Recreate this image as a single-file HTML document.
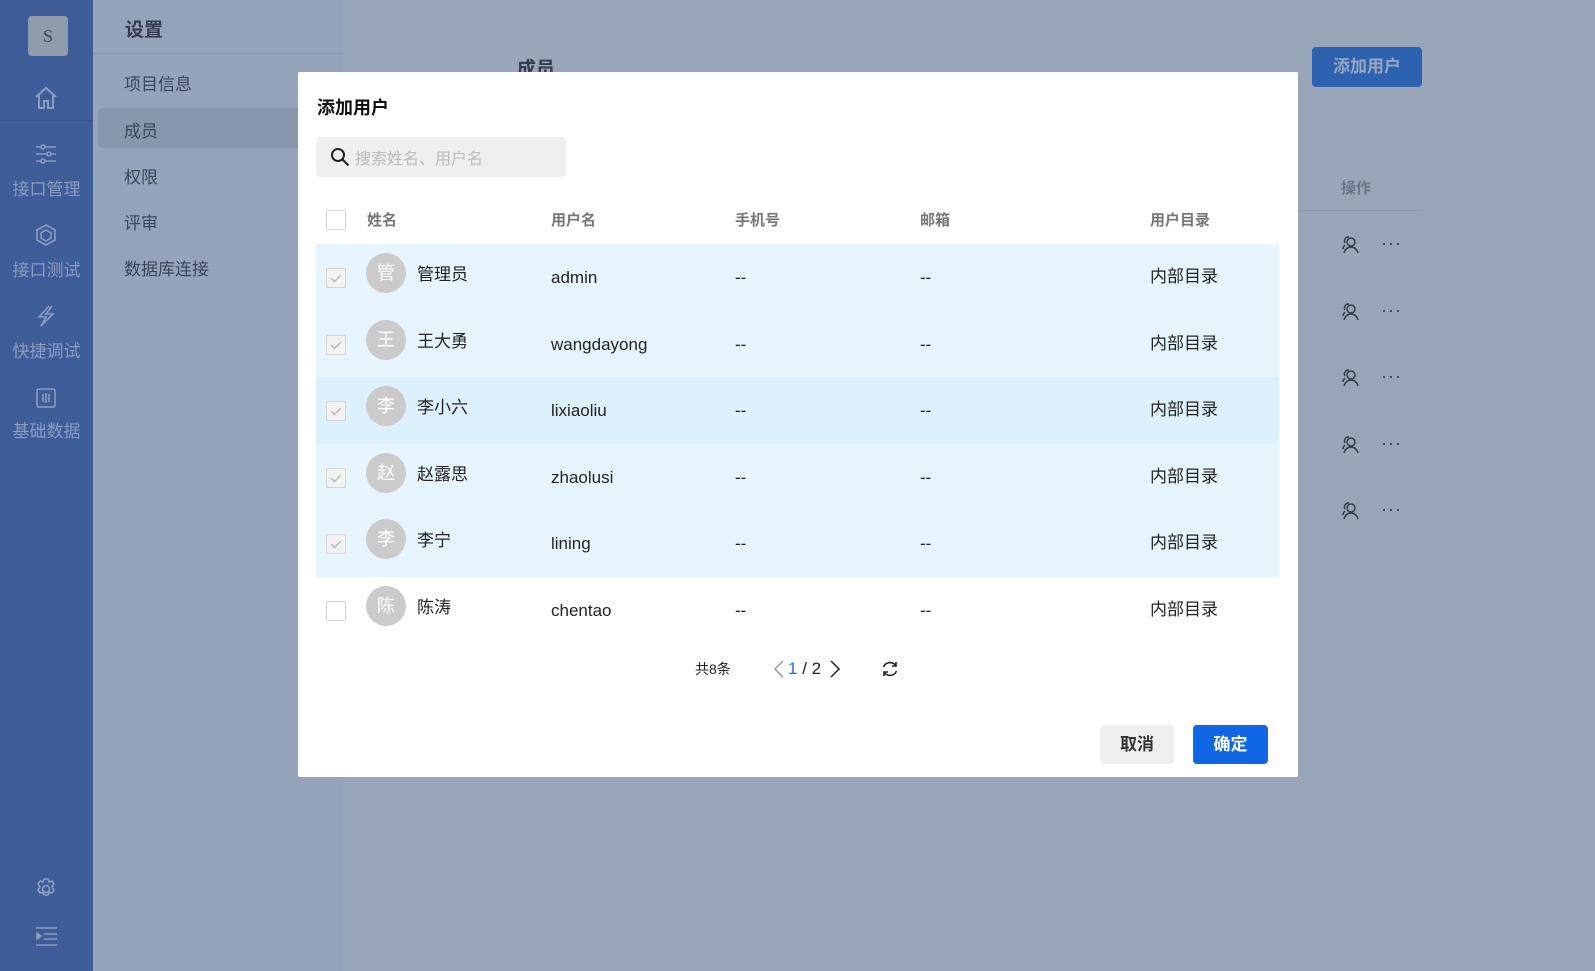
<!DOCTYPE html>
<html><head><meta charset="utf-8"><style>
*{margin:0;padding:0;box-sizing:border-box}
body{width:1595px;height:971px;position:relative;overflow:hidden;background:#99a6b9;font-family:"Liberation Sans","Noto Sans CJK SC",sans-serif;color:#222}
.a{position:absolute}
.side{left:0;top:0;width:93px;height:971px;background:#3e5c97}
.nav{left:0;width:93px;text-align:center;color:#8a9cc0;font-size:17px}
.p2{left:93px;top:0;width:250px;height:971px;background:#95a4bb}
.mi{left:124px;font-size:17px;color:#3c4658}
.modal{left:298px;top:72px;width:1000px;height:705px;background:#fff;border-radius:2px}
.row{left:316px;width:963px;height:67px;background:#e6f5fd}
.cb{width:20px;height:20px;border:1px solid #d4d4d4;border-radius:2px;background:#f2f2f2}
.av{width:40px;height:40px;border-radius:50%;background:#cbcbcb;color:#fff;font-size:18px;text-align:center;line-height:40px}
.t{font-size:17px;color:#222;line-height:20px;height:20px}
.h{font-size:15px;color:#777;font-weight:bold}
</style></head><body>
<div class="a side"></div>
<div class="a" style="left:28px;top:16px;width:40px;height:40px;background:#8d9bab;border-radius:4px;color:#3e4a5a;font-size:18px;text-align:center;line-height:40px;font-family:'Liberation Serif',serif">S</div>
<svg class="a" style="left:33px;top:85px" width="26" height="26" viewBox="0 0 26 26" fill="none" stroke="#8a9cc0" stroke-width="2"><path d="M3 12L13 3l10 9M6 10v13h5v-7h4v7h5V10"/></svg>
<div class="a" style="left:0;top:120px;width:93px;height:1px;background:#3a5690"></div>
<svg class="a" style="left:35px;top:143px" width="22" height="22" viewBox="0 0 22 22" fill="none" stroke="#8a9cc0" stroke-width="1.6"><path d="M1 4h20M1 11h20M1 18h20"/><circle cx="8" cy="4" r="2" fill="#3e5c97"/><circle cx="14" cy="11" r="2" fill="#3e5c97"/><circle cx="8" cy="18" r="2" fill="#3e5c97"/></svg>
<div class="a nav" style="top:175px">接口管理</div>
<svg class="a" style="left:35px;top:224px" width="22" height="22" viewBox="0 0 22 22" fill="none" stroke="#8a9cc0" stroke-width="1.6"><path d="M11 1l9 5v10l-9 5-9-5V6z"/><path d="M11 6l5 3v5l-5 3-5-3V9z"/></svg>
<div class="a nav" style="top:256px">接口测试</div>
<svg class="a" style="left:35px;top:305px" width="22" height="22" viewBox="0 0 22 22" fill="none" stroke="#8a9cc0" stroke-width="1.6"><path d="M14 1L4 12h7l-5 9 12-12h-7l6-8"/></svg>
<div class="a nav" style="top:337px">快捷调试</div>
<svg class="a" style="left:36px;top:388px" width="20" height="20" viewBox="0 0 20 20" fill="none" stroke="#8a9cc0" stroke-width="1.6"><rect x="1" y="1" width="18" height="18" rx="2"/><path d="M7 6v8M10 5v10M13 6v8"/></svg>
<div class="a nav" style="top:417px">基础数据</div>
<svg class="a" style="left:34px;top:877px" width="24" height="24" viewBox="0 0 24 24" fill="none" stroke="#8a9cc0" stroke-width="1.6"><circle cx="12" cy="12" r="3.5"/><path d="M10 2h4l1 3 3-1 2 3-2 3 2 3-2 3-3-1-1 3h-4l-1-3-3 1-2-3 2-3-2-3 2-3 3 1z"/></svg>
<svg class="a" style="left:36px;top:926px" width="22" height="20" viewBox="0 0 22 20" fill="none" stroke="#8a9cc0" stroke-width="1.6"><path d="M0 2h21M8 8h13M8 13h13M0 19h21"/><path d="M1 7l4 3-4 3z" fill="#8a9cc0"/></svg>

<div class="a p2"></div>
<div class="a" style="left:125px;top:15px;font-size:19px;font-weight:bold;color:#333d4d">设置</div>
<div class="a" style="left:93px;top:53px;width:250px;height:1px;background:#8b9ab1"></div>
<div class="a mi" style="top:70px">项目信息</div>
<div class="a" style="left:98px;top:108px;width:245px;height:40px;background:#8997ad;border-radius:4px"></div>
<div class="a mi" style="top:117px">成员</div>
<div class="a mi" style="top:163px">权限</div>
<div class="a mi" style="top:209px">评审</div>
<div class="a mi" style="top:255px">数据库连接</div>

<div class="a" style="left:517px;top:54px;font-size:19px;font-weight:bold;color:#333d4d">成员</div>
<div class="a" style="left:1312px;top:47px;width:110px;height:40px;background:#2d62b0;border-radius:4px;color:#98a6c0;font-size:17px;font-weight:bold;text-align:center;line-height:40px">添加用户</div>
<div class="a" style="left:1341px;top:177px;font-size:15px;font-weight:bold;color:#6c7686">操作</div>
<div class="a" style="left:1298px;top:210px;width:125px;height:1px;background:#8e9bb0"></div>
<div id="ops"></div>

<div class="a modal"></div>
<div class="a" style="left:317px;top:94px;font-size:18px;font-weight:bold;color:#111">添加用户</div>
<div class="a" style="left:316px;top:137px;width:250px;height:40px;background:#efefef;border-radius:4px"></div>
<svg class="a" style="left:330px;top:147px" width="20" height="20" viewBox="0 0 20 20" fill="none" stroke="#222" stroke-width="2"><circle cx="8" cy="8" r="6"/><path d="M12.5 12.5l6 6"/></svg>
<div class="a" style="left:355px;top:145px;font-size:16px;color:#bbb">搜索姓名、用户名</div>

<div class="a cb" style="left:326px;top:210px;background:#fff"></div>
<div class="a h" style="left:367px;top:209px">姓名</div>
<div class="a h" style="left:551px;top:209px">用户名</div>
<div class="a h" style="left:735px;top:209px">手机号</div>
<div class="a h" style="left:920px;top:209px">邮箱</div>
<div class="a h" style="left:1150px;top:209px">用户目录</div>

<div id="rows"></div>
<script>
var d=[["管","管理员","admin",1],["王","王大勇","wangdayong",1],["李","李小六","lixiaoliu",1],["赵","赵露思","zhaolusi",1],["李","李宁","lining",1],["陈","陈涛","chentao",0]];
var h="";
d.forEach(function(r,i){var top=244+i*66.6;
if(r[3])h+='<div class="a row" style="top:'+top+'px;'+(i==2?'background:#dcf1fc':'')+'"></div>';
var c=top+34;
h+='<div class="a cb" style="left:326px;top:'+(c-10)+'px;'+(r[3]?'':'background:#fff')+'">'+(r[3]?'<svg width="18" height="18" viewBox="0 0 18 18" fill="none" stroke="#bbb" stroke-width="1.5"><path d="M4 9l3.5 3.5L14 6"/></svg>':'')+'</div>';
h+='<div class="a av" style="left:366px;top:'+(c-25)+'px">'+r[0]+'</div>';
h+='<div class="a t" style="left:417px;top:'+(c-13)+'px">'+r[1]+'</div>';
h+='<div class="a t" style="left:551px;top:'+(c-10)+'px">'+r[2]+'</div>';
h+='<div class="a t" style="left:735px;top:'+(c-10)+'px">--</div>';
h+='<div class="a t" style="left:920px;top:'+(c-10)+'px">--</div>';
h+='<div class="a t" style="left:1150px;top:'+(c-11)+'px">内部目录</div>';});
document.getElementById("rows").innerHTML=h;
var o="";for(var i=0;i<5;i++){var y=234+i*66.5;
o+='<svg class="a" style="left:1340px;top:'+y+'px" width="20" height="20" viewBox="0 0 20 20" fill="none" stroke="#333d4d" stroke-width="1.5"><circle cx="11" cy="8" r="4"/><path d="M4 19c1-4 4-6 7-6s6 2 7 6"/><path d="M9 3A4 4 0 0 0 5 9M3 15c0-2 1-3 2-4"/></svg>';
o+='<div class="a" style="left:1381px;top:'+(y-1)+'px;font-size:18px;color:#333d4d;letter-spacing:1px">···</div>';}
document.getElementById("ops").innerHTML=o;
</script>

<div class="a" style="left:695px;top:659px;font-size:14px;color:#222">共8条</div>
<svg class="a" style="left:773px;top:660px" width="12" height="18" viewBox="0 0 12 18" fill="none" stroke="#999" stroke-width="1.5"><path d="M10 1L2 9l8 8"/></svg>
<div class="a" style="left:788px;top:659px;font-size:17px;color:#222"><span style="color:#1a6ee8">1</span> / 2</div>
<svg class="a" style="left:829px;top:660px" width="12" height="18" viewBox="0 0 12 18" fill="none" stroke="#222" stroke-width="1.5"><path d="M2 1l8 8-8 8"/></svg>
<svg class="a" style="left:881px;top:660px" width="18" height="18" viewBox="0 0 18 18" fill="none" stroke="#222" stroke-width="1.6"><path d="M15 6A7 7 0 0 0 2.5 7M3 12a7 7 0 0 0 12.5-1"/><path d="M15 2v4h-4M3 16v-4h4"/></svg>
<div class="a" style="left:1100px;top:725px;width:74px;height:39px;background:#efefef;border-radius:4px;font-size:17px;font-weight:bold;color:#333;text-align:center;line-height:39px">取消</div>
<div class="a" style="left:1193px;top:725px;width:75px;height:39px;background:#0f67e3;border-radius:4px;font-size:17px;font-weight:bold;color:#fff;text-align:center;line-height:39px">确定</div>
</body></html>
